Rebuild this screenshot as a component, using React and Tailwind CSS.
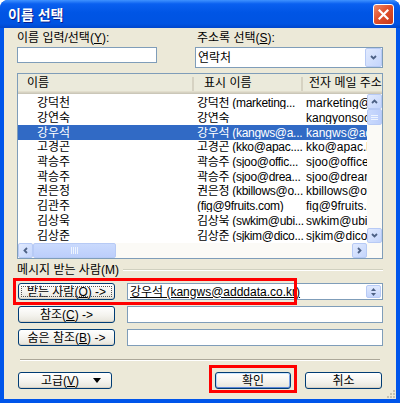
import React from "react";

const rows = [
  ["강덕천", "강덕천 (marketing...", "marketing@company.com"],
  ["강연숙", "강연숙", "kangyonsook@mail.com"],
  ["강우석", "강우석 (kangws@a...", "kangws@adddata.co.kr"],
  ["고경곤", "고경곤 (kko@apac....", "kko@apac.kr"],
  ["곽승주", "곽승주 (sjoo@offic...", "sjoo@officetel.com"],
  ["곽승주", "곽승주 (sjoo@drea...", "sjoo@dreamwiz.com"],
  ["권은정", "권은정 (kbillows@o...", "kbillows@office.com"],
  ["김관주", "(fig@9fruits.com)", "fig@9fruits.com"],
  ["김상욱", "김상욱 (swkim@ubi...", "swkim@ubibiz.com"],
  ["김상준", "김상준 (sjkim@dico...", "sjkim@dicosys.com"],
];

const F = "font-['Liberation_Sans','Noto_Sans_CJK_KR',sans-serif]";

function Chevron({ dir = "down", size = 9 }) {
  const pts = {
    down: "2,3 4.5,5.5 7,3",
    up: "2,6 4.5,3.5 7,6",
    left: "6,2 3.5,4.5 6,7",
    right: "3,2 5.5,4.5 3,7",
  }[dir];
  return (
    <svg width={size} height={size} viewBox="0 0 9 9">
      <polyline points={pts} fill="none" stroke="#4D6185" strokeWidth="1.8" />
    </svg>
  );
}

function ScrollBtn({ dir, className = "" }) {
  return (
    <div
      className={
        "flex items-center justify-center rounded-[2px] border border-[#B7CAF5] bg-[linear-gradient(to_bottom_right,#E1EAFE,#C4D5FC)] " +
        className
      }
    >
      <Chevron dir={dir} />
    </div>
  );
}

function XPButton({ children, className = "", focus = false, def = false }) {
  return (
    <div
      className={
        "relative flex items-center justify-center rounded-[3px] border border-[#003C74] bg-[linear-gradient(to_bottom,#FFFFFF,#F4F3EE_55%,#E6E4DA)] text-[12px] leading-none text-black " +
        (def ? "shadow-[inset_0_-1px_0_#5E88D8,inset_0_1px_0_#CEE7FF,inset_1px_0_0_#B8D4FB,inset_-1px_0_0_#7BA2E7] " : "shadow-[inset_0_-1px_0_#D6D0C5] ") +
        className
      }
    >
      {focus && (
        <div className="absolute inset-[2px] border border-dotted border-[#555]" />
      )}
      {children}
    </div>
  );
}

export default function App() {
  return (
    <div className={"w-[400px] h-[403px] flex flex-col bg-[#0055EA] rounded-t-[8px] " + F}>
      {/* title bar */}
      <div className="h-[28px] shrink-0 rounded-t-[8px] bg-[linear-gradient(to_bottom,#3F92FF_0%,#0A60F0_14%,#0055E5_45%,#0053E2_85%,#0046CC_100%)] flex items-center pl-[8px] pr-[6px]">
        <div className="flex-1 text-white font-bold text-[14px] leading-none [text-shadow:1px_1px_0_#0A1E8C] pt-[1px]">
          이름 선택
        </div>
        <div className="w-[21px] h-[21px] rounded-[3px] border border-white bg-[linear-gradient(to_bottom_right,#EE8A6A,#E0512D_45%,#C7381A)] flex items-center justify-center mt-[1px]">
          <svg width="11" height="11" viewBox="0 0 11 11">
            <path d="M1.5 1.5 L9.5 9.5 M9.5 1.5 L1.5 9.5" stroke="white" strokeWidth="2.2" strokeLinecap="square" />
          </svg>
        </div>
      </div>

      {/* body */}
      <div className="relative flex-1 mx-[4px] mb-[4px] bg-[#ECE9D8] px-[13px] pt-[3px] flex flex-col text-[12px] text-black">
        {/* top controls */}
        <div className="flex gap-[38px]">
          <div className="w-[140px] flex flex-col">
            <div className="h-[16px] leading-[14px]">
              이름 입력/선택(<u>Y</u>):
            </div>
            <div className="h-[16px] bg-white border border-[#7F9DB9]" />
          </div>
          <div className="w-[188px] flex flex-col">
            <div className="h-[16px] leading-[14px] pl-[2px]">
              주소록 선택(<u>S</u>):
            </div>
            <div className="h-[21px] bg-white border border-[#7F9DB9] flex items-center">
              <div className="flex-1 pl-[2px] leading-none">연락처</div>
              <ScrollBtn dir="down" className="w-[17px] h-[19px]" />
            </div>
          </div>
        </div>

        {/* list */}
        <div className="mt-[5px] h-[186px] border border-[#7F9DB9] bg-white flex flex-col">
          <div className="h-[20px] shrink-0 flex bg-[#EBEADB] shadow-[inset_0_-1px_0_#CBC7B8,inset_0_-2px_0_#D6D2C2,inset_0_-3px_0_#E2DECD] leading-none">
            <div className="w-[176px] flex items-center pl-[9px] pb-[2px] border-r-[2px] border-r-[#D6D2C2] my-[3px]">이름</div>
            <div className="w-[109px] flex items-center pl-[10px] pb-[2px] border-r-[2px] border-r-[#D6D2C2] my-[3px]">표시 이름</div>
            <div className="flex-1 flex items-center pl-[6px] pb-[2px] overflow-hidden whitespace-nowrap">전자 메일 주소</div>
          </div>
          <div className="flex-1 flex min-h-0">
            <div className="flex-1 pt-[2px] overflow-hidden">
              {rows.map((r, i) => (
                <div
                  key={i}
                  className={
                    "h-[14.7px] flex items-center whitespace-nowrap leading-none " +
                    (i === 2 ? "bg-[#316AC5] text-white" : "")
                  }
                >
                  <div className="w-[179px] pl-[19px]">{r[0]}</div>
                  <div className="w-[108px] overflow-hidden tracking-[-0.3px]">{r[1]}</div>
                  <div className="w-[62px] overflow-hidden pl-[1px]">{r[2]}</div>
                </div>
              ))}
            </div>
            <div className="w-[15px] flex flex-col bg-[#FBFAF6]">
              <ScrollBtn dir="up" className="h-[15px]" />
              <div className="h-[16px] rounded-[2px] border border-[#B7CAF5] bg-[linear-gradient(to_right,#CADAFD,#BCCEFB)] flex flex-col items-center justify-center gap-[1px]">
                <div className="w-[7px] h-[1px] bg-[#EEF4FE]" />
                <div className="w-[7px] h-[1px] bg-[#EEF4FE]" />
                <div className="w-[7px] h-[1px] bg-[#EEF4FE]" />
              </div>
              <div className="flex-1" />
              <ScrollBtn dir="down" className="h-[15px]" />
            </div>
          </div>
          <div className="h-[15px] shrink-0 flex bg-[#FBFAF6]">
            <ScrollBtn dir="left" className="w-[15px]" />
            <div className="w-[83px] rounded-[2px] border border-[#B7CAF5] bg-[linear-gradient(to_bottom,#CADAFD,#BCCEFB)] flex items-center justify-center gap-[1px]">
              <div className="w-[1px] h-[7px] bg-[#EEF4FE]" />
              <div className="w-[1px] h-[7px] bg-[#EEF4FE]" />
              <div className="w-[1px] h-[7px] bg-[#EEF4FE]" />
              <div className="w-[1px] h-[7px] bg-[#EEF4FE]" />
            </div>
            <div className="flex-1" />
            <ScrollBtn dir="right" className="w-[15px]" />
            <div className="w-[15px] bg-[#FBFAF6]" />
          </div>
        </div>

        {/* recipients */}
        <div className="mt-[4px] h-[14px] flex items-center gap-[4px] leading-none">
          <span>메시지 받는 사람(M)</span>
          <div className="flex-1 h-[2px] border-t border-t-[#D0D0BF] border-b border-b-white" />
        </div>
        <div className="mt-[6px] flex flex-col gap-[6px]">
          <div className="h-[17px] flex items-center">
            <XPButton focus className="w-[97px] h-[17px] ml-[1px]">
              받는 사람(<u>O</u>) -&gt;
            </XPButton>
            <div className="ml-[12px] flex-1 h-[17px] bg-white border border-[#7F9DB9] flex items-center">
              <div className="flex-1 pl-[2px] underline leading-none whitespace-nowrap">
                강우석 (kangws@adddata.co.kr)
              </div>
              <div className="w-[15px] h-[13px] mr-[1px] flex flex-col rounded-[2px] border border-[#B7CAF5] bg-[linear-gradient(to_bottom,#E1EAFE,#C4D5FC)] items-center justify-center gap-[2px]">
                <svg width="5" height="3" viewBox="0 0 5 3"><polygon points="0,3 2.5,0 5,3" fill="#4D6185" /></svg>
                <svg width="5" height="3" viewBox="0 0 5 3"><polygon points="0,0 2.5,3 5,0" fill="#4D6185" /></svg>
              </div>
            </div>
          </div>
          <div className="h-[17px] flex items-center">
            <XPButton className="w-[97px] h-[17px] ml-[1px]">
              참조(<u>C</u>) -&gt;
            </XPButton>
            <div className="ml-[12px] flex-1 h-[17px] bg-white border border-[#7F9DB9]" />
          </div>
          <div className="h-[17px] flex items-center">
            <XPButton className="w-[97px] h-[17px] ml-[1px]">
              숨은 참조(<u>B</u>) -&gt;
            </XPButton>
            <div className="ml-[12px] flex-1 h-[17px] bg-white border border-[#7F9DB9]" />
          </div>
        </div>

        {/* separator */}
        <div className="mt-[13px] mx-[3px] h-[2px] border-t border-t-[#ACA899] border-b border-b-white" />

        {/* bottom buttons */}
        <div className="mt-[11px] flex items-center">
          <XPButton className="w-[94px] h-[17px] ml-[1px]">
            <div className="flex-1 text-center pl-[8px]">고급(<u>V</u>)</div>
            <svg width="8" height="5" viewBox="0 0 8 5" className="mr-[10px]"><polygon points="0,0 8,0 4,5" fill="#000" /></svg>
          </XPButton>
          <XPButton def className="w-[76px] h-[17px] ml-[103px]">확인</XPButton>
          <XPButton className="w-[77px] h-[17px] ml-[14px]">취소</XPButton>
        </div>

        {/* resize grip */}
        <svg width="10" height="10" viewBox="0 0 10 10" className="absolute right-[1px] bottom-[1px]">
          {[[8,2],[8,5],[5,5],[8,8],[5,8],[2,8]].map(([x,y],i)=>(
            <rect key={i} x={x} y={y} width="2" height="2" fill="#C5C2B2" />
          ))}
        </svg>

        {/* red highlight boxes */}
        <div className="absolute left-[9px] top-[250px] w-[284px] h-[27px] border-[3px] border-[#FF0000] pointer-events-none" />
        <div className="absolute left-[205px] top-[337px] w-[88px] h-[28px] border-[3px] border-[#FF0000] pointer-events-none" />
      </div>
    </div>
  );
}
